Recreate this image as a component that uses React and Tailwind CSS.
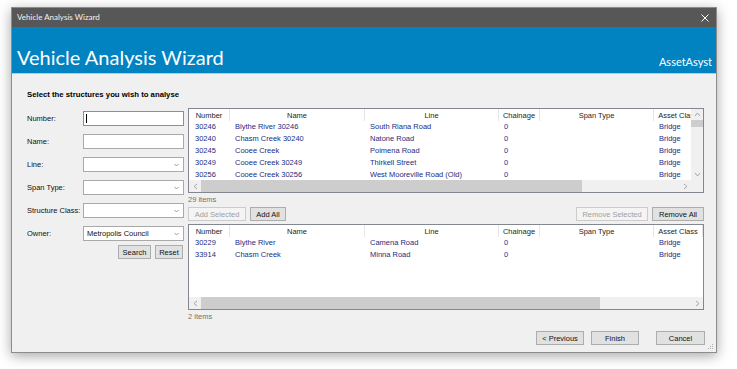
import React from "react";

const topRows = [
  ["30246", "Blythe River 30246", "South Riana Road", "0", "", "Bridge"],
  ["30240", "Chasm Creek 30240", "Natone Road", "0", "", "Bridge"],
  ["30245", "Cooee Creek", "Poimena Road", "0", "", "Bridge"],
  ["30249", "Cooee Creek 30249", "Thirkell Street", "0", "", "Bridge"],
  ["30256", "Cooee Creek 30256", "West Mooreville Road (Old)", "0", "", "Bridge"],
];

const bottomRows = [
  ["30229", "Blythe River", "Camena Road", "0", "", "Bridge"],
  ["33914", "Chasm Creek", "Minna Road", "0", "", "Bridge"],
];

const columns = [
  { label: "Number", w: "w-[41px]", pad: "pl-[6px]" },
  { label: "Name", w: "w-[135px]", pad: "pl-[5px]" },
  { label: "Line", w: "w-[134px]", pad: "pl-[5px]" },
  { label: "Chainage", w: "w-[41px]", pad: "pl-[5px]" },
  { label: "Span Type", w: "w-[114px]", pad: "pl-[5px]" },
  { label: "Asset Class", w: "w-[49px]", pad: "pl-[5px]" },
];

const Chevron = ({ dir }) => {
  const d = {
    left: "M4 1 L1 3.5 L4 6",
    right: "M1 1 L4 3.5 L1 6",
    up: "M1 4 L3.5 1 L6 4",
    down: "M1 1 L3.5 4 L6 1",
  }[dir];
  const size = dir === "left" || dir === "right" ? { w: 5, h: 7 } : { w: 7, h: 5 };
  return (
    <svg width={size.w} height={size.h} viewBox={`0 0 ${size.w} ${size.h}`}>
      <path d={d} fill="none" stroke="#a6a6a6" strokeWidth="1" />
    </svg>
  );
};

const Button = ({ children, w, disabled }) => (
  <div
    className={
      disabled
        ? `${w} flex h-[14px] items-center justify-center border border-[#cccccc] bg-[#f4f4f4] text-[#a0a0a0]`
        : `${w} flex h-[14px] items-center justify-center border border-[#adadad] bg-[#e1e1e1] text-[#111]`
    }
  >
    {children}
  </div>
);

const Grid = ({ rows, vscroll, height, thumb }) => (
  <div className={`${height} flex w-[516px] flex-col border border-[#828790] bg-white`}>
    <div className="flex min-h-0 flex-1">
      <div className="min-w-0 flex-1 overflow-hidden">
        <div className="flex h-[12px] w-max">
          {columns.map((c) => (
            <div
              key={c.label}
              className={`${c.w} flex h-full shrink-0 items-center justify-center overflow-hidden whitespace-nowrap border-r border-[#e5e5e5] text-[#1e1e1e]`}
            >
              {c.label}
            </div>
          ))}
        </div>
        {rows.map((r) => (
          <div key={r[0]} className="flex h-[11.8px] w-max items-center">
            {r.map((v, i) => (
              <div
                key={i}
                className={`${columns[i].w} ${columns[i].pad} shrink-0 overflow-hidden whitespace-nowrap text-[#1c2c80]`}
              >
                {v}
              </div>
            ))}
          </div>
        ))}
      </div>
      {vscroll && (
        <div className="flex w-[12px] flex-col bg-[#f0f0f0]">
          <div className="flex h-[11px] items-center justify-center">
            <Chevron dir="up" />
          </div>
          <div className="h-[7px] bg-[#cdcdcd]" />
          <div className="flex-1" />
          <div className="flex h-[11px] items-center justify-center">
            <Chevron dir="down" />
          </div>
        </div>
      )}
    </div>
    <div className="flex h-[12px] bg-[#f0f0f0]">
      <div className="flex w-[12px] items-center justify-center">
        <Chevron dir="left" />
      </div>
      <div className={`${thumb} h-full bg-[#cdcdcd]`} />
      <div className="flex-1" />
      <div className="flex w-[12px] items-center justify-center">
        <Chevron dir="right" />
      </div>
      {vscroll && <div className="w-[12px] bg-[#f0f0f0]" />}
    </div>
  </div>
);

const TextRow = ({ label, focused }) => (
  <div className="flex h-[15px] items-center">
    <span className="w-[56px]">{label}</span>
    <div
      className={
        focused
          ? "flex h-[15px] w-[101px] items-center border border-[#5a9ad8] bg-white pl-[2px]"
          : "flex h-[15px] w-[101px] items-center border border-[#a9a9a9] bg-white pl-[2px]"
      }
    >
      {focused && <div className="h-[9px] w-px bg-black" />}
    </div>
  </div>
);

const ComboRow = ({ label, value }) => (
  <div className="flex h-[15px] items-center">
    <span className="w-[56px] whitespace-nowrap">{label}</span>
    <div className="flex h-[15px] w-[101px] items-center justify-between border border-[#a9a9a9] bg-white pl-[3px] pr-[4px]">
      <span className="text-[#111]">{value}</span>
      <svg width="5" height="4" viewBox="0 0 5 4">
        <path d="M0.5 1 L2.5 3 L4.5 1" fill="none" stroke="#808080" strokeWidth="0.8" />
      </svg>
    </div>
  </div>
);

export default function App() {
  return (
    <div className="min-h-screen w-full bg-white pl-[11px] pt-[7px] font-['Liberation_Sans',Arial,sans-serif] text-[7.5px] leading-[11px] text-[#111]">
      <div className="flex h-[346px] w-[706px] flex-col border border-[#8c8c8c] shadow-[0_3px_12px_rgba(0,0,0,0.35)]">
        {/* title bar */}
        <div className="flex h-[19px] items-center justify-between bg-[#575757] pl-[5px] pr-[7px] font-['Lato',sans-serif] text-[8px] text-[#f2f2f2]">
          <span>Vehicle Analysis Wizard</span>
          <svg width="8" height="8" viewBox="0 0 8 8">
            <path d="M0.5 0.5 L7.5 7.5 M7.5 0.5 L0.5 7.5" stroke="#ffffff" strokeWidth="1" />
          </svg>
        </div>

        {/* blue header */}
        <div className="flex h-[47px] items-end justify-between border-b border-[#b9c9d6] bg-[#0183c1] pb-[6px] pl-[5px] pr-[4px] font-['Lato',sans-serif] leading-none text-white">
          <span className="text-[20px]">Vehicle Analysis Wizard</span>
          <span className="text-[11px]">AssetAsyst</span>
        </div>

        {/* body */}
        <div className="relative flex flex-1 flex-col bg-[#f0f0f0]">
          <div className="flex">
            <div className="w-[176px] pl-[15px] pt-[15px]">
              <div className="h-[12px] whitespace-nowrap text-[7.75px] font-bold leading-[12px] text-black">
                Select the structures you wish to analyse
              </div>
              <div className="mt-[10px] flex flex-col gap-[8px]">
                <TextRow label="Number:" focused />
                <TextRow label="Name:" />
                <ComboRow label="Line:" />
                <ComboRow label="Span Type:" />
                <ComboRow label="Structure Class:" />
                <ComboRow label="Owner:" value="Metropolis Council" />
              </div>
              <div className="mt-[4px] flex w-[156px] justify-end gap-[4px]">
                <Button w="w-[33px]">Search</Button>
                <Button w="w-[28px]">Reset</Button>
              </div>
            </div>

            <div className="w-[516px] pt-[34px]">
              <Grid rows={topRows} vscroll height="h-[85px]" thumb="w-[381px]" />
              <div className="flex h-[12px] items-center text-[#707070]">29 items</div>
              <div className="mt-[2px] flex justify-between">
                <div className="flex gap-[4px]">
                  <Button w="w-[58px]" disabled>
                    Add Selected
                  </Button>
                  <Button w="w-[36px]">Add All</Button>
                </div>
                <div className="flex gap-[4px]">
                  <Button w="w-[72px]" disabled>
                    Remove Selected
                  </Button>
                  <Button w="w-[52px]">Remove All</Button>
                </div>
              </div>
              <div className="mt-[3px]">
                <Grid rows={bottomRows} height="h-[86px]" thumb="w-[399px]" />
              </div>
              <div className="flex h-[12px] items-center text-[#707070]">2 items</div>
            </div>
          </div>

          <div className="mt-auto flex justify-end pb-[7px] pr-[11px]">
            <Button w="w-[48px]">&lt; Previous</Button>
            <div className="ml-[7px]">
              <Button w="w-[48px]">Finish</Button>
            </div>
            <div className="ml-[17px]">
              <Button w="w-[49px]">Cancel</Button>
            </div>
          </div>

          <svg className="absolute bottom-[2px] right-[2px]" width="6" height="6" viewBox="0 0 6 6">
            <rect x="4" y="0" width="1" height="1" fill="#b0b0b0" />
            <rect x="2" y="2" width="1" height="1" fill="#b0b0b0" />
            <rect x="4" y="2" width="1" height="1" fill="#b0b0b0" />
            <rect x="0" y="4" width="1" height="1" fill="#b0b0b0" />
            <rect x="2" y="4" width="1" height="1" fill="#b0b0b0" />
            <rect x="4" y="4" width="1" height="1" fill="#b0b0b0" />
          </svg>
        </div>
      </div>
    </div>
  );
}
